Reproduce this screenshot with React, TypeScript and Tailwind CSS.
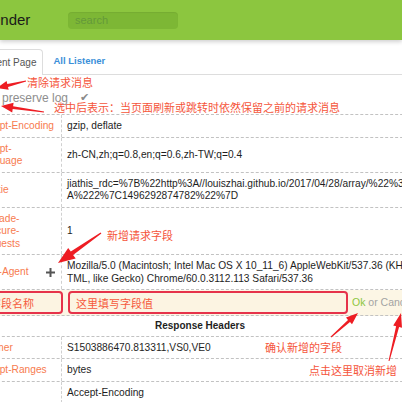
import React from "react";

type Row = { k: string; v: string; plus?: boolean };

const reqRows: Row[] = [
  { k: "Accept-Encoding", v: "gzip, deflate" },
  { k: "Accept-Language", v: "zh-CN,zh;q=0.8,en;q=0.6,zh-TW;q=0.4" },
  {
    k: "Cookie",
    v: "jiathis_rdc=%7B%22http%3A//louiszhai.github.io/2017/04/28/array/%22%3A%222%7C1496292874782%22%7D",
  },
  { k: "Upgrade-Insecure-Requests", v: "1" },
  {
    k: "User-Agent",
    v: "Mozilla/5.0 (Macintosh; Intel Mac OS X 10_11_6) AppleWebKit/537.36 (KHTML, like Gecko) Chrome/60.0.3112.113 Safari/537.36",
    plus: true,
  },
];

const resRows: Row[] = [
  { k: "X-Timer", v: "S1503886470.813311,VS0,VE0" },
  { k: "Accept-Ranges", v: "bytes" },
  { k: "Vary", v: "Accept-Encoding" },
  { k: "Content-Type", v: "text/html; charset=utf-8" },
];

function PlusIcon() {
  return (
    <svg width="9" height="9" viewBox="0 0 9 9" className="shrink-0">
      <rect x="3.5" y="0" width="2" height="9" fill="#555" />
      <rect x="0" y="3.5" width="9" height="2" fill="#555" />
    </svg>
  );
}

function KV({ k, v, plus }: Row) {
  return (
    <div className="flex border-b border-dashed border-[#c2c2c2]">
      <div className="w-[90px] shrink-0 flex items-center pl-[5px] pr-[6px] pt-[5px] pb-[4px] border-r border-dashed border-[#d0d0d0] text-[#f77b4f]">
        <span className="flex-1 min-w-0">{k}</span>
        {plus && <PlusIcon />}
      </div>
      <div className="flex-1 flex items-center pl-[5px] pr-[21px] pt-[5px] pb-[4px] break-all text-[#1e1e1e]">
        <span className="min-w-0">{v}</span>
      </div>
    </div>
  );
}

type Pt = [number, number];

function arrowPoints(t: Pt, h: Pt, headLen: number, headW: number, w0: number, w1: number) {
  const dx = h[0] - t[0];
  const dy = h[1] - t[1];
  const L = Math.hypot(dx, dy);
  const ux = dx / L;
  const uy = dy / L;
  const nx = -uy;
  const ny = ux;
  const bx = h[0] - ux * headLen;
  const by = h[1] - uy * headLen;
  const pts: Pt[] = [
    [t[0] + (nx * w0) / 2, t[1] + (ny * w0) / 2],
    [bx + (nx * w1) / 2, by + (ny * w1) / 2],
    [bx + (nx * headW) / 2, by + (ny * headW) / 2],
    [h[0], h[1]],
    [bx - (nx * headW) / 2, by - (ny * headW) / 2],
    [bx - (nx * w1) / 2, by - (ny * w1) / 2],
    [t[0] - (nx * w0) / 2, t[1] - (ny * w0) / 2],
  ];
  return pts.map((p) => `${p[0].toFixed(1)},${p[1].toFixed(1)}`).join(" ");
}

const arrows: { t: Pt; h: Pt; hl: number; hw: number; w0: number; w1: number }[] = [
  { t: [26, 81], h: [-3, 88], hl: 11, hw: 9, w0: 1, w1: 3 },
  { t: [44, 112], h: [1, 106], hl: 12, hw: 10, w0: 1, w1: 3 },
  { t: [101, 233], h: [58, 263], hl: 17, hw: 13, w0: 1.5, w1: 4 },
  { t: [331, 337], h: [358, 313], hl: 12, hw: 9, w0: 1, w1: 3 },
  { t: [389, 361], h: [401, 313], hl: 14, hw: 9, w0: 1, w1: 3 },
];

export default function App() {
  return (
    <div className="relative w-[402px] h-[402px] overflow-hidden bg-white font-['Liberation_Sans','Noto_Sans_CJK_SC',sans-serif]">
      {/* header */}
      <div className="h-[40px] bg-[#8cc63f] flex items-center shadow-[0_2px_4px_rgba(0,0,0,0.18)] relative z-10">
        <span className="-ml-[18px] w-[86px] shrink-0 text-[15px] text-[#1a1a1a] whitespace-nowrap">Sender</span>
        <input
          readOnly
          placeholder="search"
          className="w-[110px] h-[17px] rounded-[4px] bg-[#7db735] pl-[7px] text-[11px] outline-none placeholder:text-[#64993a] shadow-[inset_0_1px_1px_rgba(0,0,0,0.06)]"
        />
      </div>

      {/* tabs */}
      <div className="mt-[9px] flex border-b border-[#ddd]">
        <div className="-ml-[26px] h-[26px] -mb-px flex items-center pl-[2px] pr-[6px] bg-white border-x border-t border-[#ddd] rounded-tr-[4px] text-[10px] text-[#555] whitespace-nowrap">
          Current Page
        </div>
        <div className="h-[25px] flex items-center pl-[10px] font-bold text-[9.5px] text-[#3b8fd9]">All Listener</div>
      </div>

      {/* preserve log */}
      <div className="h-[39px] pt-[16px] flex items-start leading-[14px]">
        <span className="ml-[2px] text-[12px] text-[#8e8e8e]">preserve log</span>
        <span className="ml-[12px] text-[11px] text-[#8a8a8a] font-['DejaVu_Sans',sans-serif]">✔</span>
      </div>

      {/* table */}
      <div className="-ml-[28px] w-[456px] border-t border-dashed border-[#c2c2c2] text-[10.2px] leading-[12.5px]">
        {reqRows.map((r) => (
          <KV key={r.k} {...r} />
        ))}

        {/* new field row */}
        <div className="flex items-center bg-[#fcf6e5] border-b border-dashed border-[#c2c2c2] py-[1px]">
          <input
            readOnly
            defaultValue="字段名称"
            className="ml-[8px] w-[83px] h-[23px] shrink-0 border-2 border-[#e6334a] rounded-[4px] bg-[#fcf4e2] pl-[8px] text-[11px] text-[#f55a3c] outline-none"
          />
          <input
            readOnly
            defaultValue="这里填写字段值"
            className="ml-[5px] w-[280px] h-[23px] shrink-0 border-2 border-[#e6334a] rounded-[4px] bg-[#fcf4e2] pl-[6px] text-[11px] text-[#f55a3c] outline-none"
          />
          <span className="ml-[4px] text-[10.5px] whitespace-nowrap">
            <span className="text-[#8cc63f]">Ok</span> <span className="text-[#a3a3a3]">or Cancel</span>
          </span>
        </div>

        <div className="border-b border-dashed border-[#c2c2c2] text-center font-bold text-[10px] text-[#1e1e1e] pt-[4px] pb-[3px]">
          Response Headers
        </div>

        {resRows.map((r) => (
          <KV key={r.k} {...r} />
        ))}
      </div>

      {/* annotations */}
      <div className="absolute inset-0 pointer-events-none z-20 text-[11px] leading-[12px] text-[#f5553b]">
        <svg width="402" height="402" className="absolute left-0 top-0">
          {arrows.map((a, i) => (
            <polygon key={i} points={arrowPoints(a.t, a.h, a.hl, a.hw, a.w0, a.w1)} fill="#ee1d23" />
          ))}
        </svg>
        <span className="absolute left-[27px] top-[77px]">清除请求消息</span>
        <span className="absolute left-[54px] top-[102px] whitespace-nowrap">
          选中后表示：当页面刷新或跳转时依然保留之前的请求消息
        </span>
        <span className="absolute left-[107px] top-[230px]">新增请求字段</span>
        <span className="absolute left-[265px] top-[342px]">确认新增的字段</span>
        <span className="absolute left-[309px] top-[365px]">点击这里取消新增</span>
      </div>
    </div>
  );
}
